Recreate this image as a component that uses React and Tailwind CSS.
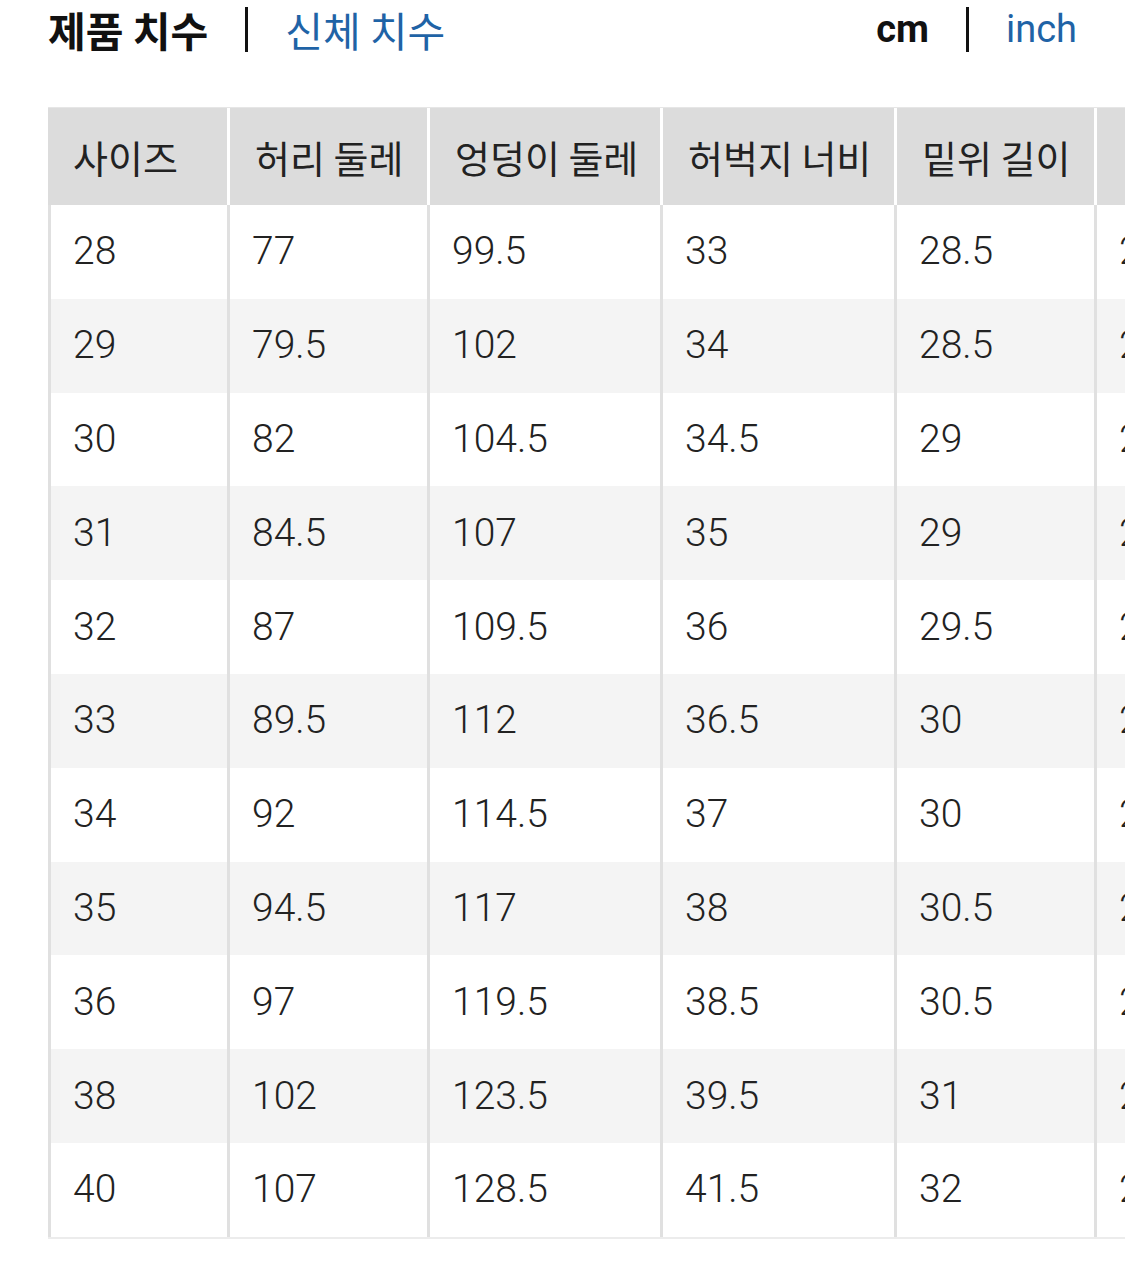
import React from "react";

const cols = ["사이즈", "허리 둘레", "엉덩이 둘레", "허벅지 너비", "밑위 길이", "밑단 너비"];
const widths = ["w-[179px]", "w-[200px]", "w-[233px]", "w-[234px]", "w-[200px]", "w-[200px]"];
const rows = [
  ["28", "77", "99.5", "33", "28.5", "20"],
  ["29", "79.5", "102", "34", "28.5", "20.5"],
  ["30", "82", "104.5", "34.5", "29", "21"],
  ["31", "84.5", "107", "35", "29", "21.5"],
  ["32", "87", "109.5", "36", "29.5", "22"],
  ["33", "89.5", "112", "36.5", "30", "22.5"],
  ["34", "92", "114.5", "37", "30", "23"],
  ["35", "94.5", "117", "38", "30.5", "23.5"],
  ["36", "97", "119.5", "38.5", "30.5", "24"],
  ["38", "102", "123.5", "39.5", "31", "24.5"],
  ["40", "107", "128.5", "41.5", "32", "25"],
];

const kr = "font-['Noto_Sans_CJK_KR','Noto_Sans',sans-serif]";
const num = "font-['Roboto','Noto_Sans_CJK_KR',sans-serif]";

export default function App() {
  return (
    <div className="w-[1125px] h-[1279px] bg-white overflow-hidden">
      <div className="flex items-center justify-between pl-[48px] pr-[48px] h-[58px]">
        <div className="flex items-center">
          <span className={`${kr} font-bold text-[41px] leading-none text-[#111]`}>제품 치수</span>
          <div className="w-[3px] h-[45px] bg-[#111] mx-[37px]"></div>
          <span className={`${kr} text-[41px] leading-none text-[#1f63a6]`}>신체 치수</span>
        </div>
        <div className="flex items-center">
          <span className={`${num} font-bold text-[38px] leading-none text-[#111]`}>cm</span>
          <div className="w-[3px] h-[45px] bg-[#111] mx-[37px]"></div>
          <span className={`${num} text-[38px] leading-none text-[#1f63a6]`}>inch</span>
        </div>
      </div>
      <div className="mt-[49px] ml-[48px] w-max border-b-2 border-[#ececec]">
        <div className="flex bg-[#dcdcdc] h-[98px] border-t border-[#e6e6e6]">
          {cols.map((c, i) => (
            <div
              key={i}
              className={`${widths[i]} shrink-0 flex items-center pl-[25px] ${i > 0 ? "border-l-[3px] border-white" : ""} ${kr} text-[38px] text-[#222] leading-none`}
            >
              {c}
            </div>
          ))}
        </div>
        {rows.map((r, ri) => (
          <div key={ri} className={`flex h-[93.8px] ${ri % 2 === 1 ? "bg-[#f4f4f4]" : "bg-white"}`}>
            {r.map((v, i) => (
              <div
                key={i}
                className={`${widths[i]} shrink-0 flex items-center pl-[22px] border-l-[3px] border-[#e0e0e0] ${num} font-light text-[39px] text-[#222] leading-none`}
              >
                {v}
              </div>
            ))}
          </div>
        ))}
      </div>
    </div>
  );
}
